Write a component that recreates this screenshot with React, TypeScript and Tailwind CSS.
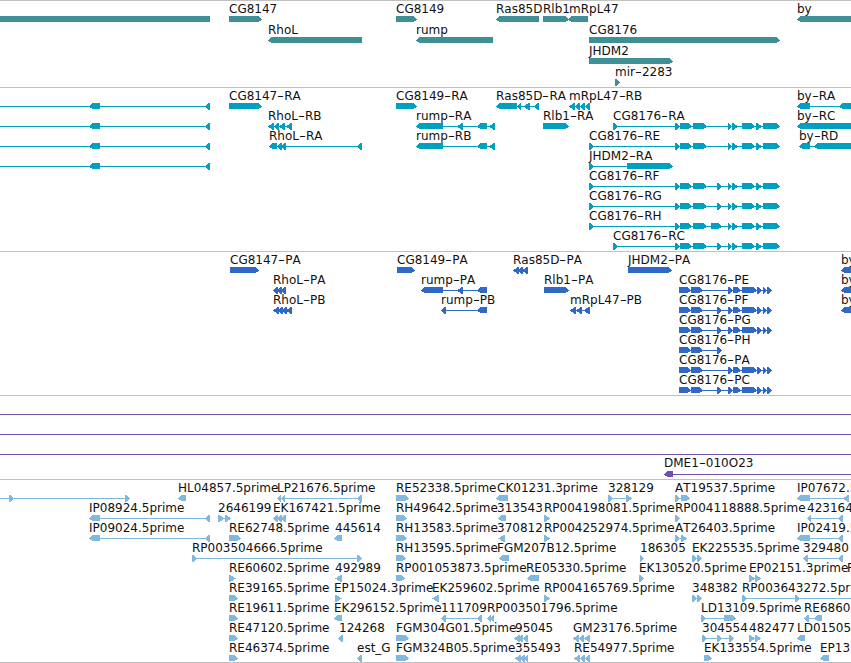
import React from "react";

type Label = [string, number, number];
type Feature = [number, number, string, number?, number?];

function parse(parts: string): [number, number][] {
  return parts.split(" ").map((p) => {
    const [a, b] = p.split("-").map(Number);
    return [a, b] as [number, number];
  });
}

function Glyph({ f, color }: { f: Feature; color: string }) {
  const [y, dir, parts, ls, le] = f;
  const ps = parse(parts);
  const start = ls ?? ps[0][0];
  const end = le ?? ps[ps.length - 1][1];
  return (
    <g fill={color}>
      {(ps.length > 1 || ls !== undefined || le !== undefined) && <rect x={start} y={y} width={end - start} height={1} />}
      {ps.map(([a, b], i) => {
        const w = b - a;
        const small = w <= 7;
        const tip = small ? Math.max(w - 1, 3) : 4;
        const top = y - 3;
        const bot = small ? y + 4 : y + 3;
        const mid = small ? y + 0.5 : y;
        let pts: string;
        if (dir > 0) pts = `${a},${top} ${b - tip},${top} ${b},${mid} ${b},${mid + (small ? 0 : 1)} ${b - tip},${bot} ${a},${bot}`;
        else if (dir < 0) pts = `${b},${top} ${a + tip},${top} ${a},${mid} ${a},${mid + (small ? 0 : 1)} ${a + tip},${bot} ${b},${bot}`;
        else pts = `${a},${top} ${b},${top} ${b},${bot} ${a},${bot}`;
        return <polygon key={i} points={pts} />;
      })}
    </g>
  );
}

function LabelText({ text }: { text: string }) {
  const pieces = text.split("-");
  return (
    <>
      {pieces.map((p, i) => (
        <React.Fragment key={i}>
          {i > 0 && <span className="inline-block w-[7px] scale-x-[1.6] text-center">-</span>}
          {p}
        </React.Fragment>
      ))}
    </>
  );
}

function Track({
  top,
  height,
  color,
  labels,
  features,
  children,
}: {
  top: number;
  height: number;
  color: string;
  labels: Label[];
  features: Feature[];
  children?: React.ReactNode;
}) {
  return (
    <section className="relative shrink-0 overflow-hidden border-t border-[#c0c0c0]" style={{ height }}>
      {children}
      <svg className="absolute left-0 top-[-1px]" width={851} height={height} viewBox={`0 ${top} 851 ${height}`} shapeRendering="crispEdges">
        {features.map((f, i) => (
          <Glyph key={i} f={f} color={color} />
        ))}
      </svg>
      {labels.map(([t, x, base], i) => (
        <span
          key={i}
          className="absolute whitespace-nowrap text-[12px] leading-[14px] text-[#111] [font-kerning:none]"
          style={{ left: x, top: base - 11 - top - 1 }}
        >
          <LabelText text={t} />
        </span>
      ))}
    </section>
  );
}

const head = "675-680 680-692 693-707";
const tail = "728-732 732-738 742-755 756-762 763-780";
const pHead = "679-691 691-703";
const pTail = "728-733 733-741 742-757 757-762 763-767 767-772";

const geneLabels: Label[] = [
  ["CG8147", 229, 13], ["CG8149", 396, 13], ["Ras85D", 496, 13], ["Rlb1", 543, 13], ["mRpL47", 569, 13], ["by", 797, 13],
  ["RhoL", 268, 34], ["rump", 416, 34], ["CG8176", 589, 34], ["JHDM2", 589, 55], ["mir-2283", 615, 76],
];
const geneFeatures: Feature[] = [
  [19, 0, "0-210"], [19, 1, "229-262"], [19, 1, "396-417"], [19, -1, "496-539"], [19, 1, "543-569"], [19, -1, "568-588"], [19, -1, "797-860"],
  [40, -1, "268-362"], [40, -1, "416-493"], [40, 1, "589-780"], [61, 1, "589-673"], [82, 1, "615-620"],
];

const rnaLabels: Label[] = [
  ["CG8147-RA", 229, 100], ["CG8149-RA", 396, 100], ["Ras85D-RA", 496, 100], ["mRpL47-RB", 569, 100], ["by-RA", 797, 100],
  ["RhoL-RB", 268, 120], ["rump-RA", 416, 120], ["Rlb1-RA", 543, 120], ["CG8176-RA", 613, 120], ["by-RC", 797, 120],
  ["RhoL-RA", 269, 140], ["rump-RB", 416, 140], ["CG8176-RE", 589, 140], ["by-RD", 799, 140],
  ["JHDM2-RA", 589, 160], ["CG8176-RF", 589, 180], ["CG8176-RG", 589, 200], ["CG8176-RH", 589, 220], ["CG8176-RC", 613, 240],
];
const rnaFeatures: Feature[] = [
  [106, -1, "89-100 205-210", 0], [126, -1, "89-100 205-210", 0], [146, -1, "89-100 205-210", 0], [166, -1, "89-100 205-210", 0],
  [106, 1, "229-262"], [106, 1, "396-417"],
  [106, -1, "496-517 517-521 523-530 534-539"], [106, -1, "569-575 575-580 580-585 585-590"],
  [106, -1, "797-810 839-860"], [126, -1, "797-860"], [146, -1, "799-810 814-860"],
  [126, -1, "268-274 274-279 279-285 286-292"], [146, -1, "269-277 277-282 281-286 357-362"],
  [126, -1, "416-443 457-463 477-487 489-495"], [146, -1, "416-443 477-487 489-495"],
  [126, 1, "543-569"],
  [126, 1, `613-618 ${head} ${tail}`],
  [146, 1, `589-594 ${head} ${tail}`],
  [166, 1, "589-594 627-673"],
  [186, 1, `589-594 ${head} 717-722 ${tail}`],
  [206, 1, `589-594 ${head} 717-722 ${tail}`],
  [226, 1, `589-594 ${head} 711-722 ${tail}`],
  [246, 1, `613-618 ${head} 717-722 ${tail}`],
];

const protLabels: Label[] = [
  ["CG8147-PA", 230, 264], ["CG8149-PA", 397, 264], ["Ras85D-PA", 513, 264], ["JHDM2-PA", 628, 264], ["by-PA", 841, 264],
  ["RhoL-PA", 273, 284], ["rump-PA", 421, 284], ["Rlb1-PA", 544, 284], ["CG8176-PE", 679, 284], ["by-PB", 841, 284],
  ["RhoL-PB", 273, 304], ["rump-PB", 441, 304], ["mRpL47-PB", 570, 304], ["CG8176-PF", 679, 304], ["by-PC", 841, 304],
  ["CG8176-PG", 679, 324], ["CG8176-PH", 679, 344], ["CG8176-PA", 679, 364], ["CG8176-PC", 679, 384],
];
const protFeatures: Feature[] = [
  [270, 1, "230-259"], [270, 1, "397-415"], [270, -1, "513-519 518-523 522-528"], [270, 1, "628-672"], [270, -1, "841-860"],
  [290, -1, "273-278 277-282 281-286"], [310, -1, "273-279 277-283 281-287 286-292"],
  [290, -1, "421-443 457-463 477-487"], [310, -1, "441-446 477-487"],
  [290, 1, "544-569"], [310, -1, "570-576 576-582 583-590"],
  [290, -1, "841-860"], [310, -1, "841-860"],
  [290, 1, `${pHead} ${pTail}`],
  [310, 1, `${pHead} 717-722 ${pTail}`],
  [330, 1, `${pHead} 717-722 ${pTail}`],
  [350, 1, `${pHead} 717-722`],
  [370, 1, `${pHead} ${pTail}`],
  [390, 1, `${pHead} 717-722 ${pTail}`],
];

const cloneLabels: Label[] = [["DME1-010O23", 664, 467]];
const cloneFeatures: Feature[] = [[474, -1, "664-673", undefined, 851]];

const estLabels: Label[] = [
  ["HL04857.5prime", 178, 492], ["LP21676.5prime", 277, 492], ["RE52338.5prime", 396, 492], ["CK01231.3prime", 497, 492], ["328129", 608, 492], ["AT19537.5prime", 675, 492], ["IP07672.5prime", 797, 492],
  ["IP08924.5prime", 89, 512], ["2646199", 218, 512], ["EK167421.5prime", 273, 512], ["RH49642.5prime", 396, 512], ["313543", 497, 512], ["RP004198081.5prime", 544, 512], ["RP004118888.5prime", 675, 512], ["423164", 807, 512],
  ["IP09024.5prime", 89, 532], ["RE62748.5prime", 229, 532], ["445614", 335, 532], ["RH13583.5prime", 396, 532], ["370812", 497, 532], ["RP004252974.5prime", 544, 532], ["AT26403.5prime", 675, 532], ["IP02419.5prime", 797, 532],
  ["RP003504666.5prime", 192, 552], ["RH13595.5prime", 396, 552], ["FGM207B12.5prime", 497, 552], ["186305", 640, 552], ["EK225535.5prime", 692, 552], ["329480", 803, 552],
  ["RE60602.5prime", 229, 572], ["492989", 335, 572], ["RP001053873.5prime", 396, 572], ["RE05330.5prime", 526, 572], ["EK130520.5prime", 639, 572], ["EP02151.3prime", 749, 572], ["FGM", 847, 572],
  ["RE39165.5prime", 229, 592], ["EP15024.3prime", 334, 592], ["EK259602.5prime", 432, 592], ["RP004165769.5prime", 544, 592], ["348382", 692, 592], ["RP003643272.5prime", 742, 592],
  ["RE19611.5prime", 229, 612], ["EK296152.5prime", 334, 612], ["111709", 441, 612], ["RP003501796.5prime", 487, 612], ["LD13109.5prime", 701, 612], ["RE68601.5prime", 804, 612],
  ["RE47120.5prime", 229, 632], ["124268", 339, 632], ["FGM304G01.5prime", 396, 632], ["95045", 515, 632], ["GM23176.5prime", 573, 632], ["304554", 702, 632], ["482477", 749, 632], ["LD01505.5prime", 797, 632],
  ["RE46374.5prime", 229, 652], ["est_G", 357, 652], ["FGM324B05.5prime", 396, 652], ["355493", 515, 652], ["RE54977.5prime", 574, 652], ["EK133554.5prime", 704, 652], ["EP13552.5prime", 820, 652],
];
const estFeatures: Feature[] = [
  [498, 1, "9-14 125-130", 0], [498, -1, "178-186"], [498, -1, "277-281 281-285 357-362"], [498, 1, "396-409"], [498, -1, "496-508"], [498, 1, "608-613 626-632"], [498, 1, "675-680 681-690"], [498, -1, "797-810 843-849"],
  [518, -1, "89-100 205-210"], [518, 1, "218-225 225-231"], [518, -1, "273-278 277-282 281-286"], [518, 1, "396-407"], [518, -1, "498-506"], [518, 1, "544-550"], [518, 1, "675-680"], [518, -1, "807-811 838-843"],
  [538, -1, "89-100 205-210"], [538, 1, "229-241"], [538, -1, "334-342"], [538, 1, "396-407"], [538, -1, "498-505"], [538, 1, "544-550"], [538, 1, "675-680 681-687"], [538, -1, "797-810 838-843"],
  [558, 1, "192-197 357-362"], [558, 1, "396-406"], [558, -1, "499-509"], [558, 1, "640-644"], [558, 1, "692-697 697-702"], [558, -1, "803-808 838-843"],
  [578, 1, "229-236"], [578, -1, "335-342"], [578, 1, "396-405"], [578, -1, "527-539"], [578, 1, "639-644"], [578, 1, "749-755 755-761"],
  [598, 1, "229-238"], [598, 1, "335-342"], [598, -1, "432-439"], [598, 1, "544-550"], [598, 1, "692-697 697-702"], [598, 1, "742-747 795-800", undefined, 851],
  [618, 1, "229-238"], [618, -1, "334-342"], [618, -1, "441-446 477-482"], [618, -1, "487-491 490-494"], [618, 1, "701-706 724-736"], [618, -1, "804-809 814-822"],
  [638, 1, "229-238"], [638, -1, "338-343"], [638, 1, "396-409"], [638, -1, "514-520 518-523 523-528"], [638, -1, "573-579 579-584 584-590"], [638, 1, "702-707 717-722 729-734"], [638, 1, "749-755 755-761"], [638, -1, "797-805"],
  [658, 1, "229-238"], [658, -1, "357-362"], [658, 1, "396-409"], [658, -1, "515-521 520-525 524-528"], [658, -1, "574-580 580-585 585-590"], [658, 1, "704-712"], [658, -1, "820-829"],
];

export default function App() {
  return (
    <main className="flex h-[663px] w-[851px] flex-col overflow-hidden bg-white font-['DejaVu_Sans',sans-serif]">
      <Track top={0} height={87} color="#3f8f96" labels={geneLabels} features={geneFeatures} />
      <Track top={87} height={164} color="#00a0c0" labels={rnaLabels} features={rnaFeatures} />
      <Track top={251} height={144} color="#3068c8" labels={protLabels} features={protFeatures} />
      <Track top={395} height={84} color="#7050b0" labels={cloneLabels} features={cloneFeatures}>
        <div className="absolute inset-x-0 top-[18px] h-px bg-[#7050b0]" />
        <div className="absolute inset-x-0 top-[38px] h-px bg-[#7050b0]" />
        <div className="absolute inset-x-0 top-[58px] h-px bg-[#7050b0]" />
      </Track>
      <Track top={479} height={183} color="#80b8e0" labels={estLabels} features={estFeatures} />
      <div className="h-px shrink-0 bg-[#c0c0c0]" />
    </main>
  );
}
